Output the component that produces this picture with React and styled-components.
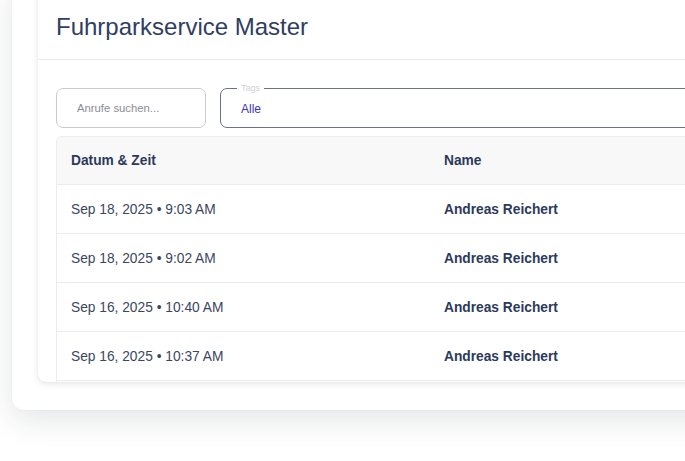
import React from 'react';
import styled, { createGlobalStyle } from 'styled-components';

const GlobalStyle = createGlobalStyle`
  html, body {
    margin: 0;
    padding: 0;
    background: #ffffff;
    overflow: hidden;
    font-family: "Liberation Sans", Arial, sans-serif;
  }
`;

const Page = styled.div`
  width: 685px;
  height: 461px;
  overflow: hidden;
`;

const OuterCard = styled.div`
  margin: -20px 0 0 12px;
  width: 720px;
  padding: 10px 0 28px 26px;
  background: #ffffff;
  border-radius: 12px;
  box-shadow: 0 10px 30px rgba(30, 40, 60, 0.12), 0 0 2px rgba(30, 40, 60, 0.06);
`;

const InnerCard = styled.div`
  height: 392px;
  display: flex;
  flex-direction: column;
  background: #ffffff;
  border-radius: 8px;
  overflow: hidden;
  box-shadow: 0 2px 6px rgba(30, 40, 60, 0.12), 0 0 1px rgba(30, 40, 60, 0.1);
`;

const Header = styled.div`
  height: 70px;
  flex-shrink: 0;
  box-sizing: border-box;
  padding: 23px 18px 0;
  border-bottom: 1px solid #e9e9ec;
`;

const Title = styled.h1`
  margin: 0;
  font-size: 24px;
  line-height: 28px;
  font-weight: 400;
  color: #2f3e62;
`;

const Filters = styled.div`
  display: flex;
  flex-shrink: 0;
  gap: 14px;
  padding: 28px 0 8px 18px;
`;

const SearchBox = styled.div`
  width: 150px;
  height: 40px;
  box-sizing: border-box;
  border: 1px solid #c8cad6;
  border-radius: 7px;
  display: flex;
  align-items: center;
  padding-left: 20px;
  font-size: 11.3px;
  color: #8a8d99;
`;

const TagsField = styled.fieldset`
  flex: 1;
  height: 40px;
  box-sizing: border-box;
  margin: 0;
  border: 1px solid #6b7290;
  border-radius: 7px;
  padding: 0 20px;
  position: relative;
  display: flex;
  align-items: center;
`;

const TagsLegend = styled.legend`
  position: absolute;
  top: -7px;
  left: 16px;
  padding: 0 4px;
  background: #ffffff;
  font-size: 9px;
  line-height: 12px;
  color: #cfd1d8;
`;

const TagsValue = styled.span`
  font-size: 12px;
  color: #3a36b8;
  margin-top: 1px;
`;

const TableWrap = styled.div`
  flex: 1;
  overflow: hidden;
  margin-left: 18px;
  border: 1px solid #ececee;
  border-right: none;
  border-bottom: none;
  border-radius: 6px 0 0 0;
`;

const Row = styled.div`
  display: grid;
  grid-template-columns: 373px 1fr;
  height: ${p => (p.head ? '47px' : '48px')};
  align-items: center;
  background: ${p => (p.head ? '#f8f8f9' : '#ffffff')};
  border-bottom: 1px solid #ececee;
  font-size: 13.75px;
`;

const Cell = styled.div`
  padding-left: 14px;
  font-weight: ${p => (p.bold ? 700 : 400)};
  color: ${p => (p.bold ? '#2b3a5c' : '#3a4763')};
  white-space: nowrap;
`;

const rows = [
  { date: 'Sep 18, 2025 • 9:03 AM', name: 'Andreas Reichert' },
  { date: 'Sep 18, 2025 • 9:02 AM', name: 'Andreas Reichert' },
  { date: 'Sep 16, 2025 • 10:40 AM', name: 'Andreas Reichert' },
  { date: 'Sep 16, 2025 • 10:37 AM', name: 'Andreas Reichert' },
];

export default function App() {
  return (
    <Page>
      <GlobalStyle />
      <OuterCard>
        <InnerCard>
          <Header>
            <Title>Fuhrparkservice Master</Title>
          </Header>
          <Filters>
            <SearchBox>Anrufe suchen...</SearchBox>
            <TagsField>
              <TagsLegend>Tags</TagsLegend>
              <TagsValue>Alle</TagsValue>
            </TagsField>
          </Filters>
          <TableWrap>
            <Row head>
              <Cell bold>Datum &amp; Zeit</Cell>
              <Cell bold>Name</Cell>
            </Row>
            {rows.map((r, i) => (
              <Row key={i}>
                <Cell>{r.date}</Cell>
                <Cell bold>{r.name}</Cell>
              </Row>
            ))}
          </TableWrap>
        </InnerCard>
      </OuterCard>
    </Page>
  );
}
